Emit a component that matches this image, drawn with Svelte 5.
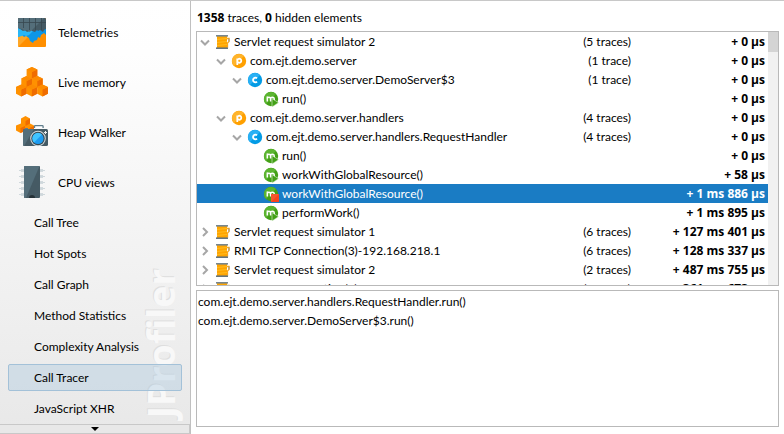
<script>
  const sections = ['Telemetries', 'Live memory', 'Heap Walker', 'CPU views'];
  const views = [
    'Call Tree',
    'Hot Spots',
    'Call Graph',
    'Method Statistics',
    'Complexity Analysis',
    'Call Tracer',
    'JavaScript XHR'
  ];
  let activeView = $state('Call Tracer');

  const rows = [
    { depth: 0, open: true, kind: 'thread', name: 'Servlet request simulator 2', traces: '(5 traces)', time: '0 µs' },
    { depth: 1, open: true, kind: 'package', name: 'com.ejt.demo.server', traces: '(1 trace)', time: '0 µs' },
    { depth: 2, open: true, kind: 'class', name: 'com.ejt.demo.server.DemoServer$3', traces: '(1 trace)', time: '0 µs' },
    { depth: 3, kind: 'enter', name: 'run()', traces: '', time: '0 µs' },
    { depth: 1, open: true, kind: 'package', name: 'com.ejt.demo.server.handlers', traces: '(4 traces)', time: '0 µs' },
    { depth: 2, open: true, kind: 'class', name: 'com.ejt.demo.server.handlers.RequestHandler', traces: '(4 traces)', time: '0 µs' },
    { depth: 3, kind: 'enter', name: 'run()', traces: '', time: '0 µs' },
    { depth: 3, kind: 'enter', name: 'workWithGlobalResource()', traces: '', time: '58 µs' },
    { depth: 3, kind: 'exit', name: 'workWithGlobalResource()', traces: '', time: '1 ms 886 µs' },
    { depth: 3, kind: 'enter', name: 'performWork()', traces: '', time: '1 ms 895 µs' },
    { depth: 0, open: false, kind: 'thread', name: 'Servlet request simulator 1', traces: '(6 traces)', time: '127 ms 401 µs' },
    { depth: 0, open: false, kind: 'thread', name: 'RMI TCP Connection(3)-192.168.218.1', traces: '(6 traces)', time: '128 ms 337 µs' },
    { depth: 0, open: false, kind: 'thread', name: 'Servlet request simulator 2', traces: '(2 traces)', time: '487 ms 755 µs' },
    { depth: 0, open: false, kind: 'thread', name: 'RMI TCP Connection(3)-192.168.218.1', traces: '(2 traces)', time: '361 ms 673 µs' }
  ];
  let selected = $state(8);

  const stack = ['com.ejt.demo.server.handlers.RequestHandler.run()', 'com.ejt.demo.server.DemoServer$3.run()'];
</script>

{#snippet cube(x, y)}
  <g transform="translate({x} {y})">
    <path d="M0 2.500 5.300 0l5.400 2.500v6.800L5.300 12 0 9.300z" fill="#ff9100" />
    <path d="M5.300 5l5.400-2.500v6.800L5.300 12z" fill="#ef6c00" />
    <path d="M0 2.500 5.300 0l5.400 2.500L5.300 5z" fill="#fd8b00" />
  </g>
{/snippet}

{#snippet sectionIcon(i)}
  <svg class="big" viewBox="0 0 32 32" aria-hidden="true">
    {#if i === 0}
      <rect x="2" y="2" width="28" height="29" rx="1" fill="#ff8f00" />
      <path d="M2 31 22 11H2z" fill="#ffa726" />
      <path d="M2 11h28v8l-2-2-3 2-1 3-2-1-1 3-3 1-1 2-3-2-1-3-3-2-2 1-2-2-2 1-2 1z" fill="#0d96e6" />
      <path d="M2 11h19l-8 8-3 1-2-1-2 1-4 1z" fill="#29b6f6" />
      <path d="M2 3q0-1 1-1h26q1 0 1 1v10l-2 1-1 2-3-2-2 1-1-1-2 2-3-1-1-1-2 1-2 1-2-2-2 1-3-2-2-1z" fill="#455a64" />
      <path d="M2 3q0-1 1-1h25L15 15l-2 1-2-2-2 1-3-2-4-1z" fill="#546e7a" />
      <path d="M2 6.500h28M7.500 2v10M13.500 2v12M19.500 2v12M25.500 2v12" stroke="#37474f" stroke-width=".8" fill="none" />
    {:else if i === 1}
      {@render cube(10.6, 1)}
      {@render cube(5.3, 10)}
      {@render cube(16, 10)}
      {@render cube(0, 18.5)}
      {@render cube(10.6, 18.5)}
      {@render cube(21.2, 18.5)}
    {:else if i === 2}
      <path d="M5 2.500 9.500 0 14 2.500v5l4 2v5l-4 2.500-5-2-4.500 2L0 14.500v-5l5-2z" fill="#ff9100" />
      <path d="M9.500 5 14 2.500v5L9.500 10zM4.500 12 9 10v5l-4.500 2zM13.500 12l4.500-2v5l-4.500 2z" fill="#ef6c00" />
      <path d="M18.500 12v-1.500q0-.8.8-.8h7q.8 0 .8.800V12" fill="#fff" stroke="#607d8b" stroke-width="1.300" />
      <rect x="7" y="13" width="25" height="17" rx="1.500" fill="#455a64" />
      <path d="M8.500 13H18L8 30q-1 0-1-1.500v-14q0-1.500 1.500-1.500z" fill="#546e7a" />
      <rect x="9" y="12" width="3" height="1.200" fill="#607d8b" />
      <circle cx="22" cy="22.500" r="7.800" fill="#cfd8dc" />
      <circle cx="22" cy="22.500" r="6.700" fill="#37474f" />
      <circle cx="22" cy="22.500" r="5.600" fill="#1e9bf0" />
      <path d="M18 26.500a5.600 5.600 0 0 1 8-8z" fill="#40c4ff" />
      <path d="M28 16.500h3M29.500 15v3" stroke="#eceff1" />
    {:else}
      <path d="M5 4.500h22M5 10.500h22M5 16.500h22M5 22.500h22M5 28.500h22" stroke="#b0bec5" stroke-width="2" />
      <path d="M3 4.500h26M3 10.500h26M3 16.500h26M3 22.500h26M3 28.500h26" stroke="#cfd8dc" stroke-width="1.200" />
      <rect x="8" y="0" width="16" height="32" rx="1" fill="#455a64" />
      <path d="M9 0h14.500L10 32H9q-1 0-1-1V1q0-1 1-1z" fill="#546e7a" />
      <path d="M13 32a3 3 0 0 1 6 0z" fill="#263238" />
    {/if}
  </svg>
{/snippet}

{#snippet rowIcon(kind)}
  <svg class="small" viewBox="0 0 16 16" aria-hidden="true">
    {#if kind === 'thread'}
      <path d="M11 4.500h3v3l-1.500 1.500v4H11" fill="none" stroke="#f5a623" stroke-width="1.300" />
      <path d="M14 4.500v3" stroke="#8d8f86" stroke-width="1" />
      <rect x="2" y="2" width="10" height="12" fill="#ffa500" />
      <path d="M2 5.500 12 4.500M2 8.500 12 7.500M2 11.500 12 10.500" stroke="#ffc02a" stroke-width=".8" />
      <rect x="1" y="1" width="12" height="1.600" fill="#78868c" />
      <rect x="1" y="13.400" width="12" height="1.600" fill="#66757c" />
    {:else if kind === 'package'}
      <circle cx="8" cy="8" r="7.200" fill="#ffa000" />
      <path d="M3 13A7 7 0 0 1 13 3z" fill="#ffb42b" />
      <path d="M6.300 12V5.500M6.300 7.500a2 2 0 1 1 0 .5" fill="none" stroke="#fff" stroke-width="1.800" />
    {:else if kind === 'class'}
      <circle cx="8" cy="8" r="7.200" fill="#039be5" />
      <path d="M3 13A7 7 0 0 1 13 3z" fill="#29b0f4" />
      <path d="M10 6.400A2.300 2.300 0 1 0 10 9.600" fill="none" stroke="#fff" stroke-width="1.800" />
    {:else}
      <circle cx="8" cy="8" r="7.200" fill="#43a016" />
      <path d="M3 13A7 7 0 0 1 13 3z" fill="#5cb531" />
      <path d="M4.300 10.500V5.500M4.300 7.500q0-1.300 1.600-1.300 1.700 0 1.700 1.600v2.700M7.600 7.800q0-1.600 1.800-1.600 1.800 0 1.800 1.600v2.700" fill="none" stroke="#fff" stroke-width="1.500" />
      {#if kind === 'enter'}
        <path d="M9 7.500 15.500 11.700 9 16z" fill="#43a016" stroke="#e3f2db" stroke-width=".6" />
      {:else}
        <rect x="8" y="8" width="8" height="8" fill="#f4451e" />
        <path d="M8 8h8l-8 8z" fill="#f4572e" />
      {/if}
    {/if}
  </svg>
{/snippet}

<div class="app">
  <nav class="sidebar" aria-label="Views">
    <span class="watermark" aria-hidden="true">JProfiler</span>
    <div class="menu">
      {#each sections as s, i}
        <button class="section">{@render sectionIcon(i)}{s}</button>
      {/each}
      {#each views as v}
        <button class="view" class:active={v === activeView} onclick={() => (activeView = v)}>{v}</button>
      {/each}
    </div>
    <button class="more" aria-label="Scroll down">
      <svg width="8" height="4" viewBox="0 0 8 4" aria-hidden="true"><path d="M0 0h8L4 4z" /></svg>
    </button>
  </nav>

  <main>
    <header><b>1358</b> traces, <b>0</b> hidden elements</header>
    <section class="traces">
      <div class="tree" role="tree" aria-label="Call traces">
        {#each rows as r, i}
          <div
            class="row"
            class:selected={i === selected}
            role="treeitem"
            tabindex="-1"
            aria-level={r.depth + 1}
            aria-expanded={r.open}
            aria-selected={i === selected}
            onclick={() => (selected = i)}
            onkeydown={(e) => e.key === 'Enter' && (selected = i)}
          >
            <span class="indent" style="width: {r.depth * 16}px"></span>
            {#if r.kind === 'thread' || r.open}
              <svg class="chevron" viewBox="0 0 16 16" aria-hidden="true">
                <path d={r.open ? 'M3 6.500 7 10.500l4-4' : 'M5 4l4 4-4 4'} />
              </svg>
            {/if}
            {@render rowIcon(r.kind)}
            <span class="name">{r.name}</span>
            <span class="count">{r.traces}</span>
            <span class="time">+ {r.time}</span>
          </div>
        {/each}
      </div>
      <div class="scrollbar"><div class="thumb"></div></div>
    </section>
    <section class="stack" aria-label="Stack trace">
      {#each stack as line}
        <div>{line}</div>
      {/each}
    </section>
  </main>
</div>

<style>
  :global(body) {
    margin: 0;
  }
  .app {
    box-sizing: border-box;
    display: flex;
    height: 100vh;
    border-top: 1px solid #c8c8c8;
    background: #fff;
    color: #000;
    font: 12px/19px Lato, 'Open Sans', sans-serif;
  }
  button {
    margin: 0;
    padding: 0;
    border: 0;
    background: none;
    color: inherit;
    font: inherit;
    text-align: left;
  }
  .sidebar {
    position: relative;
    display: flex;
    flex: none;
    flex-direction: column;
    width: 190px;
    border-right: 1px solid #c0c0c0;
    background: linear-gradient(#fff, #fefefe 12%, #e8e8e8);
  }
  .watermark {
    position: absolute;
    right: 9px;
    bottom: 16px;
    color: #f8f8f8;
    font: bold 37px/40px 'Noto Sans', sans-serif;
    text-shadow: 1px -1px 0 #dedede;
    writing-mode: vertical-rl;
    transform: rotate(180deg);
  }
  .menu {
    position: relative;
    display: flex;
    flex: 1;
    flex-direction: column;
    min-height: 0;
    padding-top: 6px;
    overflow: hidden;
  }
  .section {
    display: flex;
    flex: none;
    align-items: center;
    gap: 10px;
    height: 50px;
    padding-left: 16px;
  }
  .big {
    width: 32px;
    height: 32px;
  }
  .view {
    box-sizing: border-box;
    flex: none;
    height: 27px;
    margin: 2px 8px;
    padding-left: 25px;
    border: 1px solid transparent;
    border-radius: 2px;
  }
  .view.active {
    border-color: #a3c1d8;
    background: rgb(160 195 220 / 35%);
  }
  .more {
    display: flex;
    flex: none;
    align-items: center;
    justify-content: center;
    height: 10px;
    border: 1px solid #c8c8c8;
    border-width: 1px 1px 1px 0;
    background: #e8e8e8;
  }
  main {
    display: grid;
    flex: 1;
    grid-template-rows: 30px 259fr 137fr;
    min-width: 0;
    padding: 0 5px 7px;
  }
  header {
    line-height: 34px;
    padding-left: 1px;
  }
  b,
  .time {
    font-family: 'Open Sans', sans-serif;
    font-weight: bold;
  }
  .traces,
  .stack {
    min-width: 0;
    min-height: 0;
    border: 1px solid #b9b9b9;
    overflow: hidden;
  }
  .traces {
    display: flex;
    margin-bottom: 4px;
  }
  .stack {
    padding: 1px;
  }
  .tree {
    flex: 1;
    min-width: 0;
  }
  .scrollbar {
    flex: none;
    width: 10px;
    background: #f1f1f1;
  }
  .thumb {
    height: 20px;
    background: #d4d4d4;
  }
  .row {
    display: flex;
    align-items: center;
    height: 19px;
    padding: 0 3px 0 1px;
    white-space: nowrap;
  }
  .row.selected {
    background: #1a7cc4;
    color: #fff;
  }
  .indent {
    flex: none;
  }
  .chevron,
  .small {
    flex: none;
    width: 16px;
    height: 16px;
  }
  .chevron {
    margin-right: 1px;
    fill: none;
    stroke: #a6a6a6;
    stroke-width: 2;
  }
  .indent + .small {
    margin-left: 17px;
  }
  .name {
    flex: 1;
    margin-left: 3px;
  }
  .count,
  .time {
    text-align: right;
  }
  .time {
    width: 134px;
  }
</style>
